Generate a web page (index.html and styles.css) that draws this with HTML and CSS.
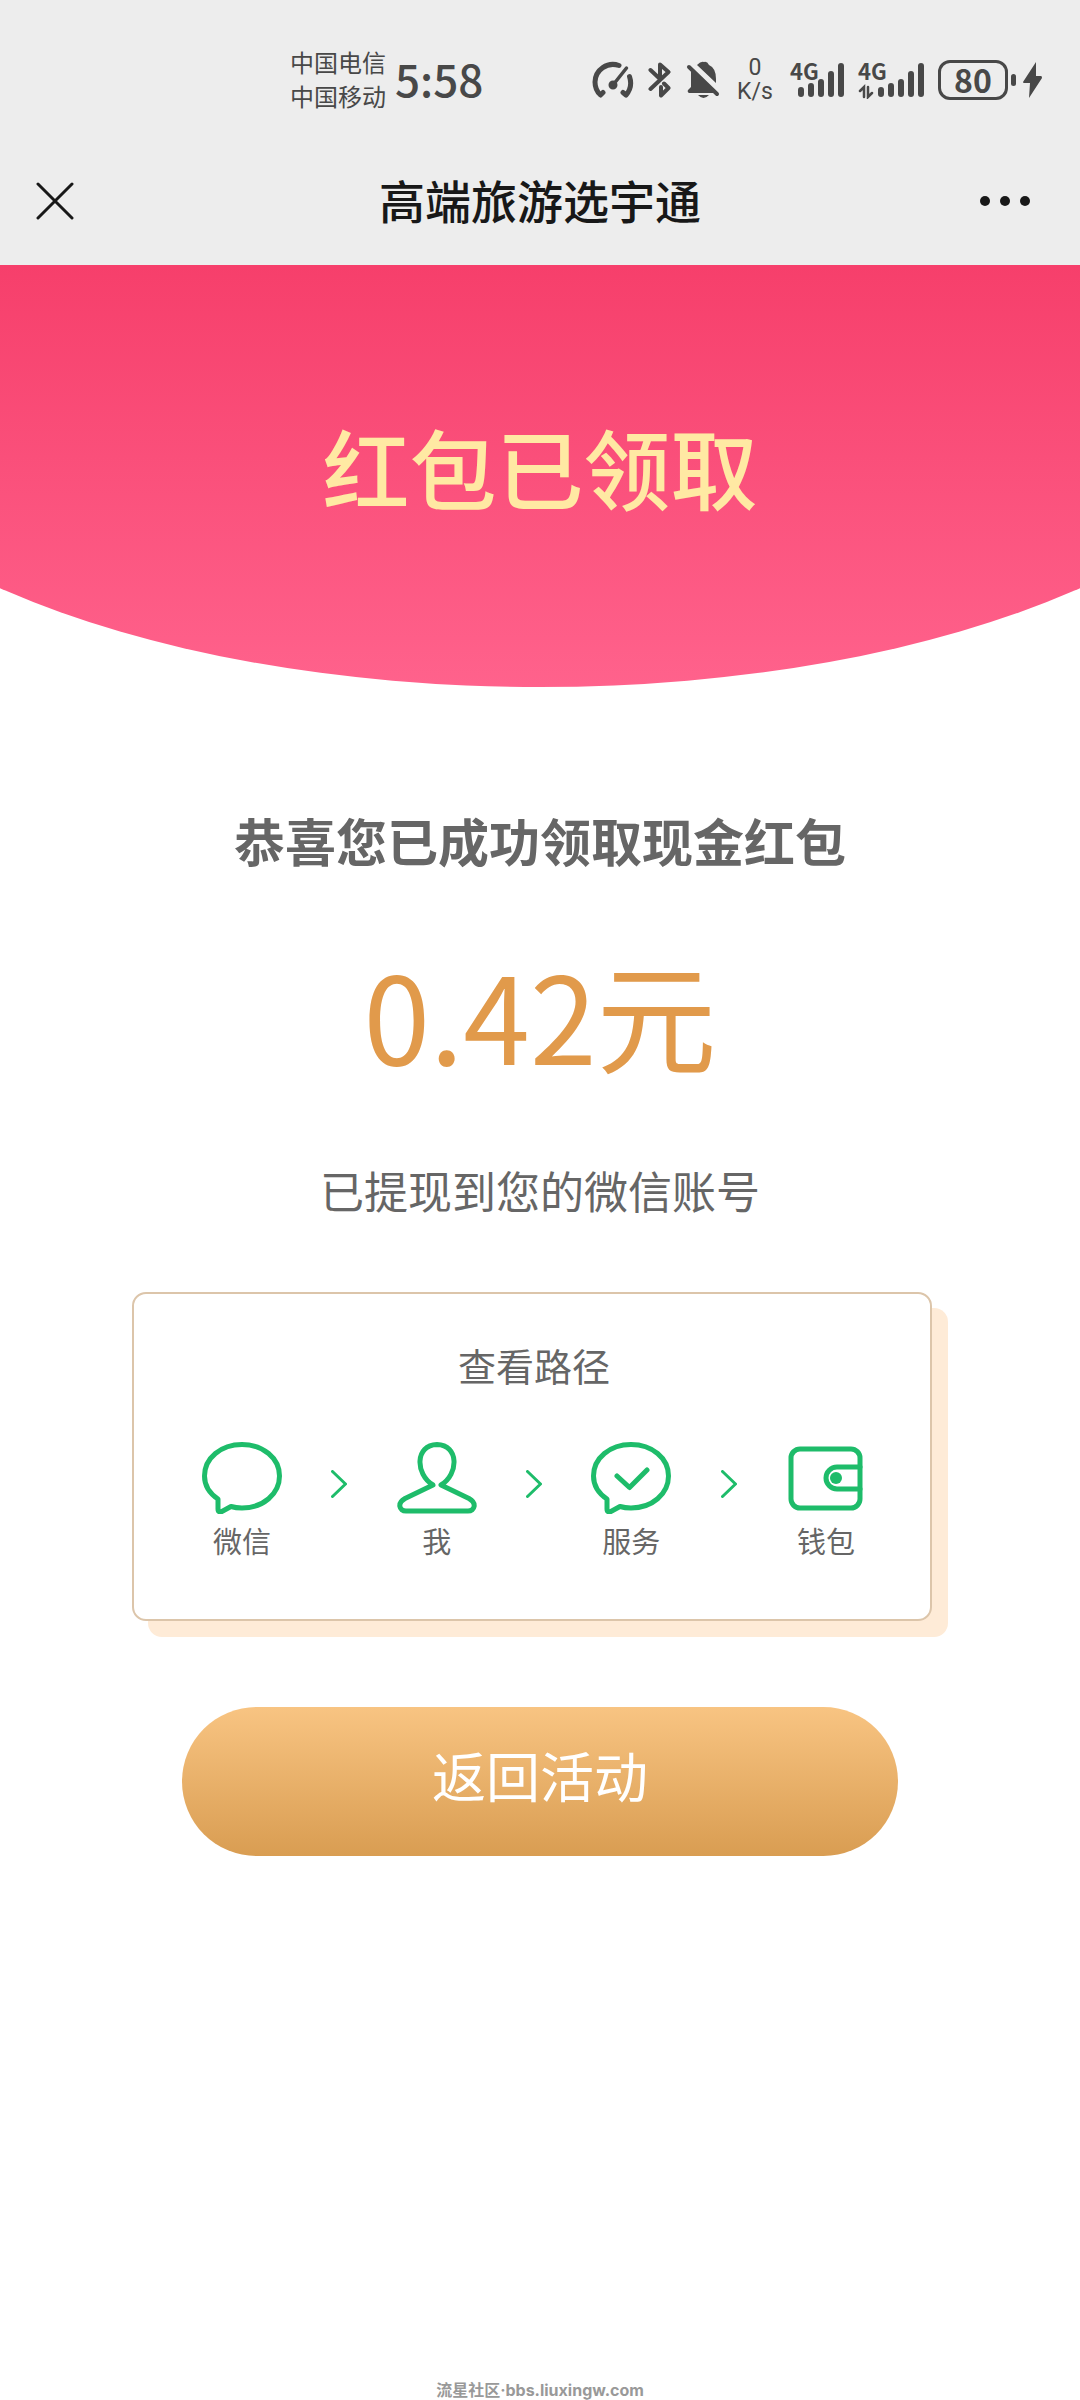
FILE: index.html
```html
<!DOCTYPE html>
<html lang="zh-CN">
<head>
<meta charset="utf-8">
<meta name="viewport" content="width=device-width, initial-scale=1">
<title>高端旅游选宇通</title>
<link rel="stylesheet" href="styles.css">
</head>
<body>
<header class="top">
  <div class="status">
    <div class="status-left">
      <div class="carriers"><span>中国电信</span><span>中国移动</span></div>
      <time class="clock">5:58</time>
    </div>
    <div class="status-right">
      <svg class="ic-gauge" width="42" height="38" viewBox="0 0 42 38" fill="none" stroke="#484848" stroke-width="5" stroke-linecap="round" stroke-linejoin="round">
        <path d="M27 4.500A18 18 0 0 0 3 21Q3 29 8.500 34L11 31.500M37.500 15.500Q41 26 34 34L31 31.500"/>
        <path d="M21 24L34.500 7" stroke-width="3.500"/><circle cx="21" cy="24" r="2.500" stroke-width="4"/>
      </svg>
      <svg class="ic-bt" width="24" height="38" viewBox="0 0 24 38" fill="none" stroke="#484848" stroke-width="4" stroke-linecap="round" stroke-linejoin="round">
        <path d="M2.500 9L12 18M12 17V3.500L20.500 11L2.500 28M16 22.500L20.500 27L13 34.500V26"/>
      </svg>
      <svg class="ic-bell" width="34" height="38" viewBox="0 0 34 38" fill="#484848">
        <path d="M5 8L29 32H3Q1 31 2 29L5 26ZM11 4Q15 0 18 1Q21 0 23 4Q30 7 30 18V22ZM12 34H23Q17.500 40 12 34Z"/>
        <path d="M7 3L34 29" stroke="#ededed" stroke-width="3"/>
        <path d="M3 6L31 33" stroke="#484848" stroke-width="4" stroke-linecap="round"/>
      </svg>
      <div class="rate"><span>0</span><span>K/s</span></div>
      <div class="signal signal-a">
        <span class="net">4G</span>
        <svg width="46" height="38" viewBox="0 0 46 38" stroke="#484848" stroke-width="6" stroke-linecap="round">
          <path d="M3 29V33M13 25V33M23 21V33M33 13V33M43 5V33"/>
        </svg>
      </div>
      <div class="signal signal-b">
        <span class="net">4G</span>
        <svg width="66" height="38" viewBox="0 0 66 38" stroke="#484848" stroke-width="6" stroke-linecap="round">
          <path d="M23 29V33M33 25V33M43 21V33M53 13V33M63 5V33"/>
          <path d="M2 30L6 26V36M10 26V36L14 32" fill="none" stroke-width="2.500"/>
        </svg>
      </div>
      <div class="battery">80</div>
      <svg class="ic-bolt" width="32" height="38" viewBox="0 0 32 38" fill="#484848">
        <rect x="0" y="13" width="5" height="12" rx="2.500"/>
        <path d="M25 1L12 21Q12 22 13 22H19L18 37L31 17Q31 15 30 15H25Z"/>
      </svg>
    </div>
  </div>
  <nav class="bar">
    <button class="icon-btn" type="button" aria-label="关闭">
      <svg width="38" height="38" viewBox="0 0 38 38" stroke="#181818" stroke-width="3" stroke-linecap="round"><path d="M2 2L36 36M36 2L2 36"/></svg>
    </button>
    <h1 class="bar-title">高端旅游选宇通</h1>
    <button class="icon-btn icon-btn-end" type="button" aria-label="更多">
      <svg width="50" height="38" viewBox="0 0 50 38" fill="#181818"><circle cx="5" cy="19" r="5"/><circle cx="25" cy="19" r="5"/><circle cx="45" cy="19" r="5"/></svg>
    </button>
  </nav>
</header>
<main class="main">
  <section class="hero"><h2>红包已领取</h2></section>
  <p class="congrats">恭喜您已成功领取现金红包</p>
  <p class="amount">0.42元</p>
  <p class="note">已提现到您的微信账号</p>
  <section class="card">
    <h3>查看路径</h3>
    <ol class="path">
      <li>
        <svg viewBox="0 0 80 72"><path d="M16 57C7 51 2.500 43 2.500 34C2.500 16 19 2.500 40 2.500S77.500 16 77.500 34S61 66 40 66Q34 66 29 64.500L19 70Q16 70 16 67Z"/></svg>
        <span>微信</span>
      </li>
      <li class="sep" aria-hidden="true"><svg viewBox="0 0 16 28"><path d="M1.500 1.500L14.500 14L1.500 26.500"/></svg></li>
      <li>
        <svg viewBox="0 0 80 72"><path d="M36 43C18 32 18 3 40 2.500C62 3 62 32 44 43L72 56.500C80 61 78 69 71 69H9C2 69 0 61 8 56.500Z"/></svg>
        <span>我</span>
      </li>
      <li class="sep" aria-hidden="true"><svg viewBox="0 0 16 28"><path d="M1.500 1.500L14.500 14L1.500 26.500"/></svg></li>
      <li>
        <svg viewBox="0 0 80 72"><path d="M16 57C7 51 2.500 43 2.500 34C2.500 16 19 2.500 40 2.500S77.500 16 77.500 34S61 66 40 66Q34 66 29 64.500L19 70Q16 70 16 67ZM26 34L38.500 45.500L56 28"/></svg>
        <span>服务</span>
      </li>
      <li class="sep" aria-hidden="true"><svg viewBox="0 0 16 28"><path d="M1.500 1.500L14.500 14L1.500 26.500"/></svg></li>
      <li>
        <svg viewBox="0 0 80 72"><rect x="5" y="7" width="69" height="59" rx="9"/><path d="M74 25H51A11 11 0 0 0 51 47H74"/><circle class="dot" cx="50" cy="36" r="6"/></svg>
        <span>钱包</span>
      </li>
    </ol>
  </section>
  <button class="back" type="button">返回活动</button>
</main>
<footer class="credit">流星社区·bbs.liuxingw.com</footer>
</body>
</html>
```
FILE: styles.css
```css
* { box-sizing: border-box; }

body {
  margin: 0;
  min-height: 100vh;
  display: flex;
  flex-direction: column;
  background: #fff;
  color: #666;
  font-family: "Noto Sans CJK SC", sans-serif;
}

h1, h2, h3, p, ol { margin: 0; padding: 0; font-weight: 400; }
svg { display: block; flex: none; }
button { border: 0; padding: 0; background: none; font: inherit; cursor: pointer; }

.top { background: #ededed; }

.status {
  display: flex;
  justify-content: space-between;
  align-items: center;
  height: 136px;
  padding: 24px 37px 0 290px;
  color: #484848;
}
.status-left, .status-right { display: flex; align-items: center; }
.status-left { gap: 9px; padding-bottom: 2px; }
.carriers { display: flex; flex-direction: column; font-size: 24px; line-height: 34px; }
.clock { padding-bottom: 2px; font-size: 44px; line-height: 48px; font-weight: 500; }
.ic-gauge { margin-right: 14px; }
.ic-bt { margin-right: 14px; }
.ic-bell { margin-right: 16px; }
.rate {
  display: flex;
  flex-direction: column;
  align-items: center;
  width: 38px;
  margin-right: 16px;
  font-family: Roboto, sans-serif;
  font-size: 23px;
  line-height: 24px;
}
.signal { position: relative; }
.signal-a { padding-left: 8px; margin-right: 14px; }
.signal-b { margin-right: 14px; }
.net {
  position: absolute;
  left: 0;
  top: 0;
  font-size: 22px;
  line-height: 18px;
  font-weight: 700;
}
.battery {
  width: 70px;
  height: 40px;
  margin-right: 3px;
  border: 3px solid #484848;
  border-radius: 12px;
  font-size: 32px;
  line-height: 32px;
  font-weight: 700;
  text-align: center;
}

.bar {
  display: grid;
  grid-template-columns: 1fr auto 1fr;
  align-items: center;
  height: 129px;
  padding: 0 50px 0 36px;
}
.bar { padding: 0 50px; }
.icon-btn { display: flex; width: 50px; margin-left: -14px; }
.icon-btn-end { margin-left: 0; justify-self: end; }
.bar-title { padding-bottom: 4px; color: #181818; font-size: 46px; line-height: 64px; font-weight: 500; }

.main { display: flex; flex-direction: column; text-align: center; }

.hero {
  height: 422px;
  padding-top: 137px;
  background: linear-gradient(#f63f6b, #ff628c);
  clip-path: ellipse(70% 78% at 50% 22%);
}
.hero h2 { color: #ffe9a3; font-size: 87px; line-height: 128px; font-weight: 500; }

.congrats { margin-top: 115px; font-size: 51px; line-height: 76px; font-weight: 700; }
.amount { margin-top: 45px; color: #e19a4b; font-size: 120px; line-height: 180px; }
.note { margin-top: 55px; font-size: 44px; line-height: 64px; }

.card {
  margin: 70px 148px 0 132px;
  padding: 41px 64px 59px 68px;
  border: 2px solid #dcc5aa;
  border-radius: 14px;
  background: #fff;
  box-shadow: 16px 16px 0 #feebd7;
}
.card h3 { font-size: 38px; line-height: 60px; }
.path { display: flex; justify-content: space-between; list-style: none; margin-top: 47px; }
.path li { width: 80px; display: flex; flex-direction: column; align-items: center; }
.path svg {
  width: 80px;
  height: 72px;
  fill: none;
  stroke: #1ebc6a;
  stroke-width: 5;
  stroke-linecap: round;
  stroke-linejoin: round;
}
.path .dot { fill: #1ebc6a; stroke: none; }
.path span { margin-top: 6px; font-size: 29px; line-height: 40px; }
.path .sep { width: 16px; padding-top: 28px; }
.path .sep svg { width: 16px; height: 28px; stroke-width: 3; }

.back {
  height: 149px;
  margin: 86px 182px 0;
  padding-bottom: 14px;
  border-radius: 75px;
  background: linear-gradient(#f8c482, #d99d52);
  color: #fff;
  font-size: 54px;
  line-height: 80px;
}

.credit {
  margin-top: auto;
  color: #999;
  font-family: Inter, "Noto Sans CJK SC", sans-serif;
  font-size: 16px;
  line-height: 20px;
  font-weight: 700;
  text-align: center;
}
```
